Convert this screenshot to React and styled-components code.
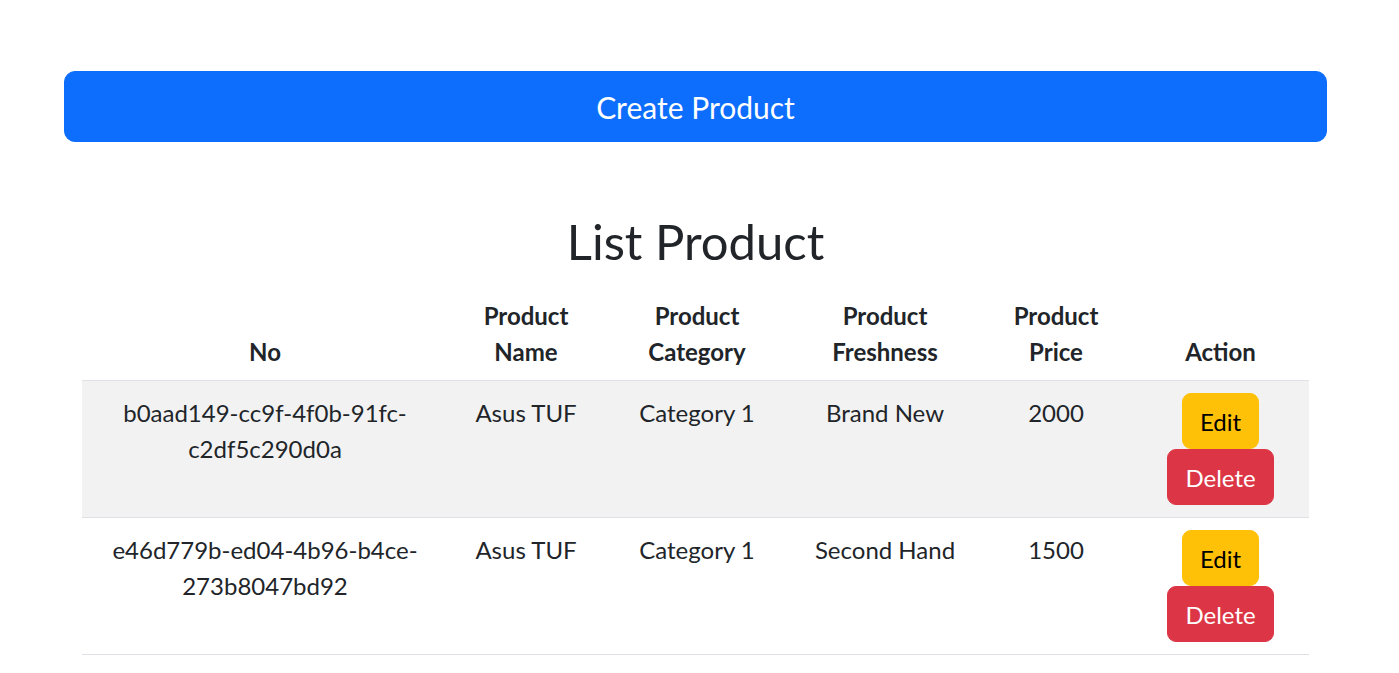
import React from "react";
import styled, { createGlobalStyle } from "styled-components";

const GlobalStyle = createGlobalStyle`
  html, body {
    margin: 0;
    padding: 0;
    background: #ffffff;
  }
  body {
    font-family: "Segoe UI", Lato, "Open Sans", "Liberation Sans", sans-serif;
    color: #212529;
    -webkit-font-smoothing: antialiased;
  }
`;

const Page = styled.main`
  padding: 71px 72px 0 64px;
`;

const CreateButton = styled.button`
  display: block;
  width: 100%;
  height: 71px;
  padding: 2px 0 0;
  border: 1px solid #0d6efd;
  border-radius: 11px;
  background: #0d6efd;
  color: #ffffff;
  font-family: inherit;
  font-size: 30px;
  line-height: 45px;
  cursor: pointer;
`;

const Title = styled.h1`
  margin: 65px 0 12px;
  height: 65px;
  padding-top: 4px;
  box-sizing: border-box;
  font-size: 49px;
  line-height: 61px;
  font-weight: 400;
  text-align: center;
`;

const Table = styled.table`
  width: calc(100% - 36px);
  margin: 0 18px;
  border-collapse: collapse;
  table-layout: fixed;
  text-align: center;
  font-size: 24px;
  line-height: 36px;
`;

const HeadCell = styled.th`
  padding: 14px 12px 10px;
  vertical-align: bottom;
  font-weight: 700;
  border-bottom: 1px solid #dee2e6;
`;

const Row = styled.tr`
  background: ${(p) => (p.$striped ? "#f2f2f2" : "transparent")};
`;

const Cell = styled.td`
  padding: ${(p) => (p.$action ? "12px" : "14px 12px 10px")};
  vertical-align: top;
  border-bottom: 1px solid #dee2e6;
  overflow-wrap: break-word;
`;

const ActionStack = styled.div`
  display: flex;
  flex-direction: column;
  align-items: center;
`;

const ActionButton = styled.button`
  font-family: inherit;
  font-size: 24px;
  line-height: 36px;
  padding: 10px 17px 8px;
  border: 1px solid ${(p) => (p.$variant === "danger" ? "#dc3545" : "#ffc107")};
  border-radius: 9px;
  background: ${(p) => (p.$variant === "danger" ? "#dc3545" : "#ffc107")};
  color: ${(p) => (p.$variant === "danger" ? "#ffffff" : "#000000")};
  cursor: pointer;
`;

const columns = [366, 156, 186, 190, 152, 177];

const products = [
  {
    id: "b0aad149-cc9f-4f0b-91fc-c2df5c290d0a",
    name: "Asus TUF",
    category: "Category 1",
    freshness: "Brand New",
    price: 2000,
  },
  {
    id: "e46d779b-ed04-4b96-b4ce-273b8047bd92",
    name: "Asus TUF",
    category: "Category 1",
    freshness: "Second Hand",
    price: 1500,
  },
];

export default function App() {
  return (
    <>
      <GlobalStyle />
      <Page>
        <CreateButton>Create Product</CreateButton>
        <Title>List Product</Title>
        <Table>
          <colgroup>
            {columns.map((w, i) => (
              <col key={i} style={{ width: w }} />
            ))}
          </colgroup>
          <thead>
            <tr>
              <HeadCell>No</HeadCell>
              <HeadCell>Product Name</HeadCell>
              <HeadCell>Product Category</HeadCell>
              <HeadCell>Product Freshness</HeadCell>
              <HeadCell>Product Price</HeadCell>
              <HeadCell>Action</HeadCell>
            </tr>
          </thead>
          <tbody>
            {products.map((p, i) => (
              <Row key={p.id} $striped={i % 2 === 0}>
                <Cell>{p.id}</Cell>
                <Cell>{p.name}</Cell>
                <Cell>{p.category}</Cell>
                <Cell>{p.freshness}</Cell>
                <Cell>{p.price}</Cell>
                <Cell $action>
                  <ActionStack>
                    <ActionButton>Edit</ActionButton>
                    <ActionButton $variant="danger">Delete</ActionButton>
                  </ActionStack>
                </Cell>
              </Row>
            ))}
          </tbody>
        </Table>
      </Page>
    </>
  );
}
